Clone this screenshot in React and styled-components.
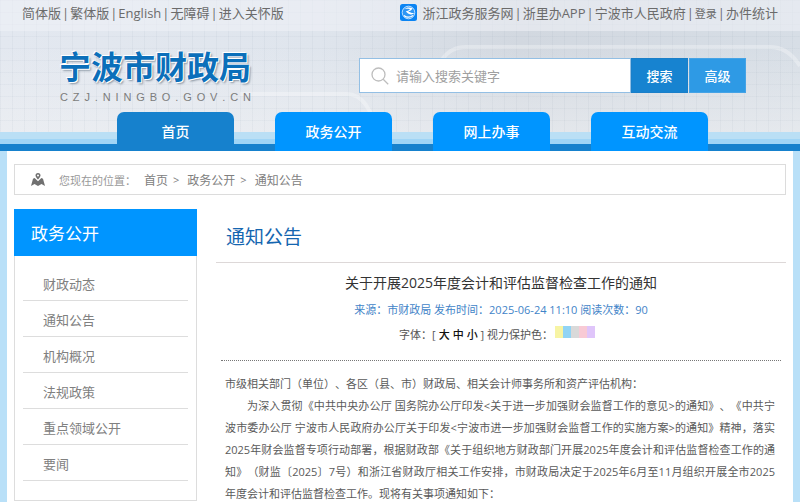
import React from "react";
import styled, { createGlobalStyle } from "styled-components";

const Global = createGlobalStyle`
  * { box-sizing: border-box; }
  body {
    margin: 0;
    background: #b9e0f8;
    font-family: "Open Sans", "Noto Sans CJK SC", sans-serif;
    font-size: 11px;
    color: #555;
    text-spacing-trim: space-all;
  }
  a { color: inherit; text-decoration: none; }
  h1, h2, p, ul { margin: 0; padding: 0; }
  button, input { font-family: inherit; }
`;

const Header = styled.header`
  position: relative;
  background:
    repeating-linear-gradient(90deg, rgba(110, 130, 150, 0.06) 0 1px, transparent 1px 12px),
    repeating-linear-gradient(180deg, rgba(110, 130, 150, 0.05) 0 1px, transparent 1px 12px),
    linear-gradient(180deg, rgba(240, 241, 243, 0) 30%, rgba(240, 241, 243, 0.7) 100%),
    linear-gradient(90deg, #e3e8f0 0%, #dfe5ed 40%, #d2d8e0 65%, #d7dee6 100%);
`;

const Curves = styled.svg`
  position: absolute;
  inset: 0;
  width: 100%;
  height: 100%;
  pointer-events: none;
`;

const TopBar = styled.div`
  position: relative;
  display: flex;
  justify-content: space-between;
  align-items: center;
  height: 31px;
  padding: 0 22px 6px;
  background: rgba(240, 243, 247, 0.55);
  font-size: 13px;
  color: #6b6b6b;
  white-space: nowrap;
`;

const LinkBar = styled.nav`
  display: flex;
  align-items: center;
  gap: 1px;
`;

const SmallLink = styled.a`
  font-size: 11px;
`;

const Brand = styled.div`
  position: relative;
  display: flex;
  justify-content: space-between;
  align-items: flex-start;
  height: 81px;
  padding: 15px 54px 0 59px;
`;

const LogoName = styled.h1`
  font-size: 32px;
  line-height: 42px;
  font-weight: 700;
  color: #0b6fba;
  text-shadow: 0 0 1px #fff, 1px 1px 0 #fff, -1px -1px 0 #fff, 2px 2px 2px #8c98a6;
`;

const LogoDomain = styled.div`
  display: flex;
  justify-content: space-between;
  padding: 1px 0 0 1px;
  font-family: "Liberation Sans", sans-serif;
  font-size: 11px;
  line-height: 16px;
  color: #7c7c7c;
`;

const Search = styled.form`
  display: flex;
  width: 387px;
  height: 35px;
  margin-top: 12px;
`;

const SearchField = styled.label`
  display: flex;
  flex: 1;
  align-items: center;
  gap: 7px;
  padding-left: 11px;
  background: #fff;
  border: 1px solid #93bfe4;
`;

const SearchInput = styled.input`
  flex: 1;
  min-width: 0;
  padding: 0;
  border: 0;
  outline: 0;
  background: transparent;
  font-size: 13px;
  &::placeholder { color: #a0a0a0; opacity: 1; }
`;

const SearchButton = styled.button`
  width: 57px;
  margin-left: ${(p) => (p.$light ? "1px" : "0")};
  padding: 0;
  border: 1px solid ${(p) => (p.$light ? "#45a3e6" : "#1a7fc9")};
  background: ${(p) => (p.$light ? "#2e9ae5" : "#1783d0")};
  color: #fff;
  font-size: 13px;
  font-weight: 500;
`;

const Tabs = styled.nav`
  position: relative;
  display: flex;
  gap: 41px;
  height: 39px;
  padding: 0 92px 0 117px;
  background: linear-gradient(180deg, transparent 20px, #badff5 20px 27px, #a0d5f6 27px 32px, #1681cd 32px);
`;

const Tab = styled.a`
  flex: 1;
  border-radius: 7px 7px 0 0;
  background: ${(p) => (p.$active ? "#1681cd" : "#0095ff")};
  color: #fff;
  font-size: 14px;
  font-weight: 500;
  line-height: 40px;
  text-align: center;
`;

const Page = styled.main`
  margin: 0 7px;
  padding: 13px 7px 1px;
  background: #fff;
`;

const Crumbs = styled.nav`
  display: flex;
  align-items: center;
  height: 31px;
  padding-left: 16px;
  border: 1px solid #dcdcdc;
  font-size: 12px;
  color: #808080;
`;

const CrumbLabel = styled.span`
  margin: 0 8px 0 14px;
  font-size: 11px;
  color: #999;
`;

const Arrow = styled.span`
  margin: 0 8px 0 5px;
  font-size: 11px;
`;

const Columns = styled.div`
  display: grid;
  grid-template-columns: 183px 1fr;
  gap: 19px;
  align-items: start;
  margin-top: 14px;
`;

const Side = styled.aside`
  border: 1px solid #ddd;
  border-top: 0;
`;

const SideTitle = styled.h2`
  height: 47px;
  margin: 0 -1px;
  padding-left: 17px;
  background: #0095ff;
  color: #fff;
  font-size: 17px;
  font-weight: 400;
  line-height: 49px;
`;

const SideList = styled.ul`
  padding: 9px 8px 19px;
  list-style: none;
`;

const SideItem = styled.li`
  height: 36px;
  padding: 2px 0 0 20px;
  border-bottom: 1px solid #ddd;
  font-size: 13px;
  line-height: 34px;
  color: #808080;
`;

const ChannelTitle = styled.h2`
  height: 54px;
  padding-left: 10px;
  border-bottom: 1px solid #ddd8d8;
  color: #1566b0;
  font-size: 19px;
  font-weight: 400;
  line-height: 57px;
`;

const ArticleHead = styled.div`
  margin: 0 5px;
  padding: 7px 0 17px;
  border-bottom: 1px dotted #777;
  text-align: center;
`;

const ArticleTitle = styled.h1`
  color: #333;
  font-size: 14px;
  font-weight: 400;
  line-height: 26px;
`;

const Meta = styled.p`
  color: #3f84c8;
  line-height: 28px;
`;

const Tools = styled.div`
  display: flex;
  justify-content: center;
  align-items: center;
  height: 19px;
  padding-right: 8px;
`;

const SizeButton = styled.button`
  margin-left: 3px;
  padding: 0;
  border: 0;
  background: none;
  color: #111;
  font-size: 11px;
  font-weight: 500;
`;

const Swatches = styled.span`
  display: flex;
  margin: 0 0 4px 2px;
`;

const Swatch = styled.button`
  width: 8px;
  height: 12px;
  padding: 0;
  border: 0;
  background: ${(p) => p.$color};
`;

const Body = styled.div`
  padding: 12px 11px 0 9px;
  line-height: 22px;
  text-align: justify;
  color: #5a5a5a;
`;

const Para = styled.p`
  text-indent: ${(p) => (p.$indent ? "22px" : "0")};
`;

const leftLinks = ["简体版", "繁体版", "English", "无障碍", "进入关怀版"];
const tabs = ["首页", "政务公开", "网上办事", "互动交流"];
const sideItems = ["财政动态", "通知公告", "机构概况", "法规政策", "重点领域公开", "要闻"];
const swatches = [["黄", "#f7f4a4"], ["蓝", "#91d4f5"], ["灰", "#d9d9d9"], ["粉", "#f8cad5"], ["紫", "#dfc5fa"]];

const ServiceMark = styled.svg`
  width: 17px;
  height: 17px;
  margin-right: 4px;
`;

function ServiceIcon() {
  return (
    <ServiceMark viewBox="0 0 17 17" aria-hidden="true">
      <rect width="17" height="17" rx="2.5" fill="#0b84f3" />
      <circle cx="8.5" cy="8.5" r="6.300" fill="#2f97f5" stroke="#cfe9ff" strokeWidth="0.9" />
      <path d="M4.200 5.200C6.500 3.200 9.500 3 12.500 4.200C11.800 6 10 7.200 8.200 7.300C10 8.600 12 9.200 14 9C13.200 10.200 12 10.600 10.600 10.400C8.300 10 6.800 8.800 5.800 7.200C7.800 7 9.200 6.300 10 5.200C8 4.700 6 4.800 4.200 5.200Z" fill="#fff" />
      <path d="M4 11.500C6.500 13.600 10 13.600 13 11.600" fill="none" stroke="#fff" strokeWidth="1.2" />
    </ServiceMark>
  );
}

function SearchIcon() {
  return (
    <svg width="18" height="18" viewBox="0 0 18 18" fill="none" stroke="#bdbdbd" strokeWidth="1.3" aria-hidden="true">
      <circle cx="7.500" cy="7.500" r="6.500" />
      <path d="M12.200 12.200l5 5" />
    </svg>
  );
}

function PlaceIcon() {
  return (
    <svg width="14" height="13" viewBox="0 0 14 13" fill="#707070" aria-hidden="true">
      <path fillRule="evenodd" d="M7 0a2.500 2.500 0 0 1 2.500 2.500C9.500 4 7 6.500 7 6.500S4.500 4 4.500 2.500A2.500 2.500 0 0 1 7 0zm0 1.500a1 1 0 1 0 0 2 1 1 0 0 0 0-2z" />
      <path d="M3.600 5L7 8.200 10.400 5 12 5.800 14 13 10.500 11 7 13 3.500 11 0 13 2 5.800z" />
    </svg>
  );
}

export default function App() {
  return (
    <>
      <Global />
      <Header>
        <Curves viewBox="0 0 800 151" preserveAspectRatio="none" fill="none" stroke="#fff" strokeOpacity="0.3" strokeWidth="4">
          <path d="M442 60Q450 47 466 47H770Q788 47 800 66" />
          <path d="M240 94H347Q358 94 366 105L378 125" />
        </Curves>
        <TopBar>
          <LinkBar>
            {leftLinks.map((t, i) => (
              <React.Fragment key={t}>
                {i > 0 && <span>|</span>}
                <a href="#top">{t}</a>
              </React.Fragment>
            ))}
          </LinkBar>
          <LinkBar>
            <ServiceIcon />
            <a href="#zw">浙江政务服务网</a>
            <span>|</span>
            <a href="#app">浙里办APP</a>
            <span>|</span>
            <a href="#gov">宁波市人民政府</a>
            <span>|</span>
            <SmallLink href="#login">登录</SmallLink>
            <span>|</span>
            <a href="#stats">办件统计</a>
          </LinkBar>
        </TopBar>
        <Brand>
          <div>
            <LogoName>宁波市财政局</LogoName>
            <LogoDomain aria-label="CZJ.NINGBO.GOV.CN">
              {"CZJ.NINGBO.GOV.CN".split("").map((c, i) => <span key={i}>{c}</span>)}
            </LogoDomain>
          </div>
          <Search onSubmit={(e) => e.preventDefault()}>
            <SearchField>
              <SearchIcon />
              <SearchInput type="text" aria-label="搜索" placeholder="请输入搜索关键字" />
            </SearchField>
            <SearchButton type="submit">搜索</SearchButton>
            <SearchButton type="button" $light>高级</SearchButton>
          </Search>
        </Brand>
        <Tabs>
          {tabs.map((t, i) => <Tab key={t} href="#tab" $active={i === 0}>{t}</Tab>)}
        </Tabs>
      </Header>
      <Page>
        <Crumbs>
          <PlaceIcon />
          <CrumbLabel>您现在的位置：</CrumbLabel>
          <a href="#home">首页</a>
          <Arrow>&gt;</Arrow>
          <a href="#open">政务公开</a>
          <Arrow>&gt;</Arrow>
          <a href="#notice">通知公告</a>
        </Crumbs>
        <Columns>
          <Side>
            <SideTitle>政务公开</SideTitle>
            <SideList>
              {sideItems.map((t) => <SideItem key={t}><a href="#item">{t}</a></SideItem>)}
            </SideList>
          </Side>
          <article>
            <ChannelTitle>通知公告</ChannelTitle>
            <ArticleHead>
              <ArticleTitle>关于开展2025年度会计和评估监督检查工作的通知</ArticleTitle>
              <Meta>来源：市财政局 发布时间：2025-06-24 11:10 阅读次数：90</Meta>
              <Tools>
                <span>字体：[</span>
                <SizeButton>大</SizeButton>
                <SizeButton>中</SizeButton>
                <SizeButton>小</SizeButton>
                <span>&nbsp;] 视力保护色：</span>
                <Swatches>
                  {swatches.map(([name, color]) => <Swatch key={name} $color={color} aria-label={name} />)}
                </Swatches>
              </Tools>
            </ArticleHead>
            <Body>
              <Para>市级相关部门（单位）、各区（县、市）财政局、相关会计师事务所和资产评估机构：</Para>
              <Para $indent>
                为深入贯彻《中共中央办公厅 国务院办公厅印发&lt;关于进一步加强财会监督工作的意见&gt;的通知》、《中共宁波市委办公厅 宁波市人民政府办公厅关于印发&lt;宁波市进一步加强财会监督工作的实施方案&gt;的通知》精神，落实2025年财会监督专项行动部署，根据财政部《关于组织地方财政部门开展2025年度会计和评估监督检查工作的通知》（财监〔2025〕7号）和浙江省财政厅相关工作安排，市财政局决定于2025年6月至11月组织开展全市2025年度会计和评估监督检查工作。现将有关事项通知如下：
              </Para>
            </Body>
          </article>
        </Columns>
      </Page>
    </>
  );
}
